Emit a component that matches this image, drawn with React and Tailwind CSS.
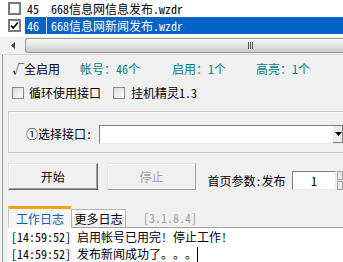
import React from "react";

const FONT = {
  fontFamily:
    '"Noto Sans Mono CJK SC","Noto Sans CJK SC","Liberation Mono",monospace',
};

function ListCheck({ checked }) {
  return (
    <div className="w-[13px] h-[13px] border-2 border-[#7a7a7a] bg-white flex items-center justify-center shrink-0">
      {checked && (
        <svg width="9" height="9" viewBox="0 0 9 9">
          <path d="M1 4.5 L3.2 7 L8 1.5" stroke="#000" strokeWidth="1.8" fill="none" />
        </svg>
      )}
    </div>
  );
}

function Box() {
  return (
    <div className="w-[12px] h-[12px] border border-[#8a8a8a] bg-gradient-to-br from-[#dcdcdc] to-white shrink-0" />
  );
}

function Dot() {
  return <span className="inline-block w-[12px]">。</span>;
}

export default function App() {
  return (
    <div
      className="w-[343px] h-[262px] bg-[#f0f0f0] overflow-hidden text-[12px] leading-none text-black flex flex-col"
      style={FONT}
    >
      {/* list view */}
      <div className="bg-white h-[37px] flex flex-col">
        <div className="h-[17px] flex items-center">
          <div className="w-[25px] pl-[8px] flex items-center">
            <ListCheck />
          </div>
          <div className="flex-1 h-full flex items-center">
            <span className="w-[22px] pl-[2px]">45</span>
            <span className="pl-[4px]">668信息网信息发布.wzdr</span>
          </div>
        </div>
        <div className="h-[17px] flex items-center">
          <div className="w-[25px] pl-[8px] flex items-center">
            <ListCheck checked />
          </div>
          <div className="flex-1 h-full flex items-center bg-[#0563c6] text-white">
            <span className="w-[22px] pl-[2px] h-full flex items-center border-r border-[#cfe0f3]">46</span>
            <span className="pl-[4px]">668信息网新闻发布.wzdr</span>
          </div>
        </div>
      </div>

      {/* horizontal scrollbar */}
      <div className="h-[18px] flex items-stretch bg-[#f0f0f0] border-b border-[#d8d8d8]">
        <div className="w-[25px] flex items-center justify-center pl-[2px]">
          <svg width="5" height="7" viewBox="0 0 5 7">
            <path d="M4 0 L0 3.5 L4 7 Z" fill="#404040" />
          </svg>
        </div>
        <div className="flex-1 my-[1px] rounded-l-[3px] border border-r-0 border-[#9c9c9c] bg-gradient-to-b from-[#f8f8f8] via-[#e4e4e4] to-[#c9c9c9] flex items-center pl-[222px]">
          <div className="flex gap-[1px]">
            <div className="w-[1px] h-[7px] bg-[#555]" />
            <div className="w-[1px] h-[7px] bg-[#555]" />
            <div className="w-[1px] h-[7px] bg-[#555]" />
          </div>
        </div>
      </div>

      {/* lower panel */}
      <div className="flex-1 ml-[2px] border-l border-[#8c99a8] pl-[5px] flex flex-col">
        {/* status row */}
        <div className="h-[27px] flex items-center">
          <span className="pl-[4px] w-[72px]">√全启用</span>
          <span className="text-[#008080] w-[92px]">帐号：46个</span>
          <span className="text-[#008080] w-[84px]">启用：1个</span>
          <span className="text-[#008080]">高亮：1个</span>
        </div>

        {/* checkbox row */}
        <div className="h-[22px] flex items-center">
          <div className="pl-[4px] flex items-center gap-[5px] w-[105px]">
            <Box />
            <span>循环使用接口</span>
          </div>
          <div className="flex items-center gap-[6px]">
            <Box />
            <span>挂机精灵1.3</span>
          </div>
        </div>

        {/* group box */}
        <div className="mt-[7px] h-[42px] border border-[#c9c9c9] border-r-0 shadow-[inset_1px_1px_0_#fff] flex items-center pl-[17px] pt-[4px]">
          <span className="w-[73px]">①选择接口:</span>
          <div className="flex-1 h-[19px] bg-white border-t border-l border-[#7f7f7f] border-b border-b-[#e8e8e8] flex justify-end">
            <div className="w-[11px] h-full bg-[#ececec] border-l border-[#fff] shadow-[inset_-1px_-1px_0_#808080] flex items-center justify-center">
              <svg width="7" height="4" viewBox="0 0 7 4">
                <path d="M0 0 H7 L3.5 4 Z" fill="#000" />
              </svg>
            </div>
          </div>
        </div>

        {/* buttons row */}
        <div className="mt-[10px] h-[27px] flex items-center">
          <div className="w-[90px] h-[27px] border border-t-[#e3e3e3] border-l-[#e3e3e3] border-b-[#696969] border-r-[#696969] shadow-[inset_-1px_-1px_0_#a0a0a0,inset_1px_1px_0_#fff] flex items-center justify-center">
            开始
          </div>
          <div className="ml-[9px] w-[90px] h-[27px] border border-t-[#e3e3e3] border-l-[#e3e3e3] border-b-[#a0a0a0] border-r-[#a0a0a0] shadow-[inset_1px_1px_0_#fff] flex items-center justify-center text-[#a0a0a0]">
            停止
          </div>
          <span className="ml-[11px] mt-[8px] w-[85px]">首页参数:发布</span>
          <div className="mt-[8px] w-[44px] h-[19px] bg-white border-t border-l border-[#7f7f7f] border-b border-r border-b-[#e8e8e8] border-r-[#e8e8e8] flex items-center justify-center">
            1
          </div>
          <div className="mt-[8px] ml-[1px] w-[6px] h-[19px] flex flex-col gap-[1px]">
            <div className="flex-1 border border-[#a0a0a0] bg-[#ececec]" />
            <div className="flex-1 border border-[#a0a0a0] bg-[#ececec]" />
          </div>
        </div>

        {/* tabs */}
        <div className="mt-[16px] h-[22px] flex items-end">
          <div className="w-[63px] h-[22px] border-t-[3px] border-[#f5a31a] bg-[#f7f7f7] border-l border-l-[#c9c9c9] flex items-center justify-center text-[#0f5fb4] pt-[1px]">
            工作日志
          </div>
          <div className="w-[55px] h-[19px] border border-[#b0b4b8] border-b-[#9da3a8] bg-gradient-to-b from-white to-[#ececec] flex items-center justify-center">
            更多日志
          </div>
          <div className="flex-1 h-[19px] border-b border-[#9da3a8] flex items-center pl-[17px] text-[#a0a0a0]">
            [3.1.8.4]
          </div>
        </div>

        {/* log */}
        <div className="flex-1 bg-white pl-[3px] pt-[3px] flex flex-col gap-[5px]">
          <div className="h-[12px] flex items-center whitespace-pre">[14:59:52] 启用帐号已用完! 停止工作!</div>
          <div className="h-[12px] flex items-center whitespace-pre">
            [14:59:52] 发布新闻成功了
            <Dot />
            <Dot />
            <Dot />
            <span className="inline-block w-[1px] h-[15px] bg-black" />
          </div>
        </div>
      </div>
    </div>
  );
}
